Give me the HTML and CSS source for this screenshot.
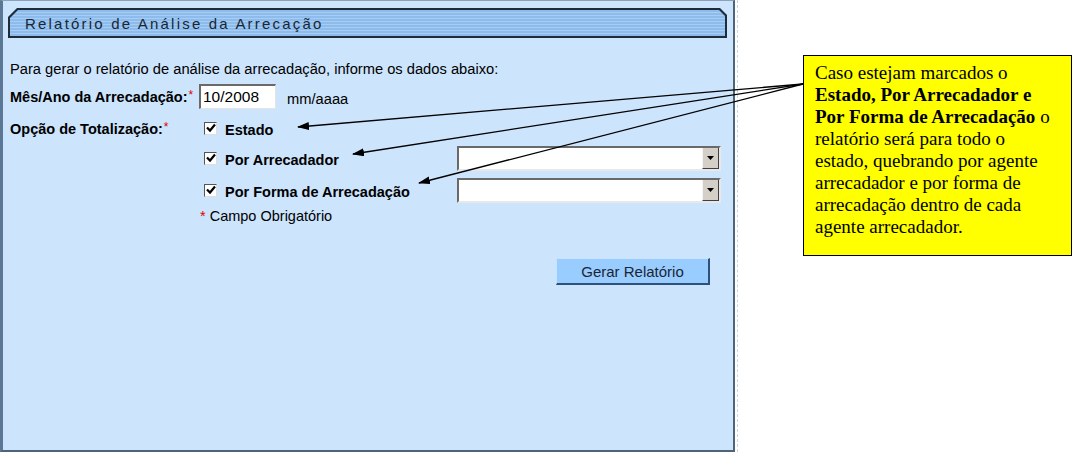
FILE: index.html
```html
<!DOCTYPE html>
<html lang="pt">
<head>
    <meta charset="UTF-8">
    <title>Relatório de Análise da Arrecadação</title>
    <link rel="stylesheet" href="styles.css">
</head>
<body>

<div class="page">
    <div class="frame">
        <div class="panel">
            <div class="title-border">
                <div class="title-bar">Relatório de Análise da Arrecação</div>
            </div>

            <div class="form">
                <p class="intro">Para gerar o relatório de análise da arrecadação, informe os dados abaixo:</p>

                <div class="row row-date">
                    <div class="label">Mês/Ano da Arrecadação:<span class="req">*</span></div>
                    <div class="field">
                        <div class="text-input">10/2008</div>
                        <span class="hint">mm/aaaa</span>
                    </div>
                </div>

                <div class="row row-opt">
                    <div class="label">Opção de Totalização:<span class="req">*</span></div>
                    <div class="field">
                        <span class="check"><svg width="10" height="10" viewBox="0 0 10 10"><path d="M1 4.5 L4 7.5 L9 1.5" fill="none" stroke="#000" stroke-width="2.2"/></svg></span>
                        <span class="opt">Estado</span>
                    </div>
                </div>

                <div class="row row-opt2">
                    <div class="label"></div>
                    <div class="field">
                        <span class="check"><svg width="10" height="10" viewBox="0 0 10 10"><path d="M1 4.5 L4 7.5 L9 1.5" fill="none" stroke="#000" stroke-width="2.2"/></svg></span>
                        <span class="opt opt-wide">Por Arrecadador</span>
                        <div class="select"><span class="drop"><svg width="7" height="4" viewBox="0 0 7 4"><path d="M0 0 H7 L3.5 4 Z" fill="#000"/></svg></span></div>
                    </div>
                </div>

                <div class="row row-opt3">
                    <div class="label"></div>
                    <div class="field">
                        <span class="check"><svg width="10" height="10" viewBox="0 0 10 10"><path d="M1 4.5 L4 7.5 L9 1.5" fill="none" stroke="#000" stroke-width="2.2"/></svg></span>
                        <span class="opt opt-wide">Por Forma de Arrecadação</span>
                        <div class="select"><span class="drop"><svg width="7" height="4" viewBox="0 0 7 4"><path d="M0 0 H7 L3.5 4 Z" fill="#000"/></svg></span></div>
                    </div>
                </div>

                <div class="required-note"><span class="req">*</span> Campo Obrigatório</div>

                <div class="actions">
                    <button class="btn">Gerar Relatório</button>
                </div>
            </div>
        </div>
    </div>

    <!-- anotacao sobre a tela -->
    <svg class="arrows" width="1077" height="453" viewBox="0 0 1077 453">
        <defs>
            <marker id="head" markerWidth="12" markerHeight="8" refX="11" refY="4" orient="auto" markerUnits="userSpaceOnUse">
                <path d="M0 0 L12 4 L0 8 Z" fill="#000"/>
            </marker>
        </defs>
        <line x1="803" y1="84" x2="298" y2="127" stroke="#000" stroke-width="1.3" marker-end="url(#head)"/>
        <line x1="803" y1="84" x2="353" y2="154" stroke="#000" stroke-width="1.3" marker-end="url(#head)"/>
        <line x1="803" y1="84" x2="419" y2="183" stroke="#000" stroke-width="1.3" marker-end="url(#head)"/>
    </svg>

    <div class="note">
        Caso estejam marcados o<br>
        <b>Estado, Por Arrecadador e</b><br>
        <b>Por Forma de Arrecadação</b> o<br>
        relatório será para todo o<br>
        estado, quebrando por agente<br>
        arrecadador e por forma de<br>
        arrecadação dentro de cada<br>
        agente arrecadador.
    </div>
</div>

</body>
</html>
```

FILE: styles.css
```css
body {
    margin: 0;
    background-color: #ffffff;
    font-family: "Liberation Sans", Arial, sans-serif;
}

.page {
    position: relative;
    width: 1077px;
    height: 453px;
}

.frame {
    width: 735px;
    padding-right: 2px;
    border-right: 1px dashed #c8d6e4;
    height: 452px;
}

.panel {
    box-sizing: border-box;
    height: 452px;
    background-color: #cce4fc;
    border-left: 3px solid #5a7896;
    border-top: 1px solid #8ea2b6;
    border-right: 2px solid #4e6478;
    border-bottom: 2px solid #4e6478;
    padding: 7px 6px 0 5px;
}

.title-border {
    height: 30px;
    padding: 2px;
    box-sizing: border-box;
    background-color: #1f2d3b;
    clip-path: polygon(9px 0, calc(100% - 7px) 0, 100% 7px, 100% 100%, 0 100%, 0 9px);
}

.title-bar {
    height: 100%;
    background: repeating-linear-gradient(to bottom, #8dbcec 0, #8dbcec 2px, #a6cdf3 2px, #a6cdf3 3px);
    clip-path: polygon(8px 0, calc(100% - 6px) 0, 100% 6px, 100% 100%, 0 100%, 0 8px);
    color: #1a2634;
    font-size: 15px;
    letter-spacing: 2.2px;
    line-height: 27px;
    padding-left: 15px;
}

.form {
    padding-left: 2px;
    font-size: 14.7px;
    color: #000;
}

.intro {
    margin: 23px 0 0 0;
    line-height: 17px;
}

.row {
    display: grid;
    grid-template-columns: 189px 1fr;
    align-items: center;
}

.label {
    font-weight: bold;
    font-size: 14.5px;
}

.req {
    color: #e00000;
    font-weight: normal;
    font-size: 12px;
    vertical-align: 3px;
    margin-left: 1px;
}

.field {
    display: flex;
    align-items: center;
}

.row-date {
    margin-top: 5px;
    height: 27px;
}

.text-input {
    box-sizing: border-box;
    width: 77px;
    height: 25px;
    background: #fff;
    border-top: 2px solid #6a6a6a;
    border-left: 2px solid #6a6a6a;
    border-right: 1px solid #e4e4e4;
    border-bottom: 1px solid #e4e4e4;
    font-size: 15.5px;
    line-height: 22px;
    padding-left: 2px;
}

.hint {
    margin-left: 11px;
    margin-top: 4px;
}

.row-opt {
    margin-top: 3px;
    height: 30px;
}

.row-opt2 {
    height: 30px;
}

.row-opt3 {
    height: 34px;
}

.check {
    box-sizing: border-box;
    width: 13px;
    height: 13px;
    margin-left: 5px;
    background: #fff;
    border-top: 1px solid #555;
    border-left: 1px solid #555;
    border-right: 1px solid #ddd;
    border-bottom: 1px solid #ddd;
    display: flex;
    align-items: center;
    justify-content: center;
}

.opt {
    font-weight: bold;
    font-size: 14.5px;
    margin-left: 8px;
    margin-top: 4px;
}

.opt-wide {
    width: 232px;
}

.select {
    position: relative;
    box-sizing: border-box;
    width: 264px;
    height: 25px;
    background: #fff;
    border-top: 2px solid #6a6a6a;
    border-left: 2px solid #6a6a6a;
    border-right: 2px solid #e8e8e8;
    border-bottom: 2px solid #e8e8e8;
}

.drop {
    position: absolute;
    right: 0;
    top: 0;
    bottom: 0;
    width: 17px;
    background: #d4d0c8;
    border-left: 1px solid #f4f4f4;
    border-bottom: 1px solid #404040;
    border-right: 1px solid #404040;
    box-sizing: border-box;
    display: flex;
    align-items: center;
    justify-content: center;
}

.required-note {
    margin-left: 189px;
    margin-top: 1px;
    font-size: 14.5px;
}

.required-note .req {
    font-size: 14.5px;
    vertical-align: 0;
}

.actions {
    display: flex;
    justify-content: flex-end;
    padding-right: 17px;
    margin-top: 34px;
}

.btn {
    width: 154px;
    height: 27px;
    background-color: #99ccff;
    border-top: 1px solid #c8e2ff;
    border-left: 1px solid #c8e2ff;
    border-right: 2px solid #30507c;
    border-bottom: 2px solid #30507c;
    font-family: "Liberation Sans", Arial, sans-serif;
    font-size: 15px;
    color: #1a2634;
    padding: 0;
}

.arrows {
    position: absolute;
    left: 0;
    top: 0;
    pointer-events: none;
}

.note {
    position: absolute;
    left: 803px;
    top: 55px;
    width: 269px;
    height: 201px;
    box-sizing: border-box;
    background-color: #ffff00;
    border: 1px solid #000;
    padding: 6px 0 0 11px;
    font-family: "Liberation Serif", "Times New Roman", serif;
    font-size: 19px;
    line-height: 22px;
    white-space: nowrap;
    color: #000;
}
```
